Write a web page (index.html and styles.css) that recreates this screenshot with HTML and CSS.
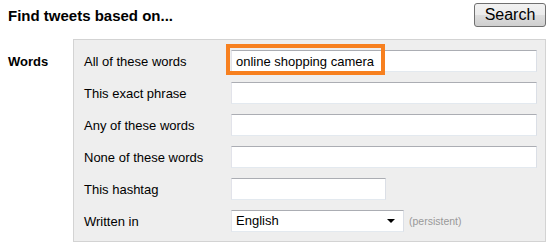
FILE: index.html
```html
<!DOCTYPE html>
<html lang="en">
<head>
    <meta charset="UTF-8">
    <title>Advanced Search</title>
    <link rel="stylesheet" href="styles.css">
</head>
<body>
    <div class="page">
        <div class="header">
            <h2>Find tweets based on...</h2>
            <button class="search-btn">Search</button>
        </div>

        <div class="section">
            <div class="section-title">Words</div>
            <div class="fields">
                <div class="row">
                    <label>All of these words</label>
                    <div class="field highlight-wrap">
                        <input type="text" value="online shopping camera">
                        <!-- orange marker drawn over the first box -->
                        <span class="highlight"></span>
                    </div>
                </div>
                <div class="row">
                    <label>This exact phrase</label>
                    <div class="field"><input type="text"></div>
                </div>
                <div class="row">
                    <label>Any of these words</label>
                    <div class="field"><input type="text"></div>
                </div>
                <div class="row">
                    <label>None of these words</label>
                    <div class="field"><input type="text"></div>
                </div>
                <div class="row">
                    <label>This hashtag</label>
                    <div class="field"><input type="text" class="short"></div>
                </div>
                <div class="row">
                    <label>Written in</label>
                    <div class="field">
                        <div class="select">
                            <span>English</span>
                            <span class="arrow"></span>
                        </div>
                        <span class="note">(persistent)</span>
                    </div>
                </div>
            </div>
        </div>
    </div>
</body>
</html>
```

FILE: styles.css
```css
body {
    margin: 0;
    font-family: "Liberation Sans", Arial, sans-serif;
    font-size: 13px;
    color: #000;
    background: #fff;
}
.page {
    padding: 3px 7px 5px 8px;
}
.header {
    display: flex;
    justify-content: space-between;
    align-items: center;
    height: 24px;
}
.header h2 {
    margin: 0;
    font-size: 15px;
    font-weight: bold;
}
.search-btn {
    height: 24px;
    width: 72px;
    padding: 0;
    font-family: "Liberation Sans", Arial, sans-serif;
    font-size: 16px;
    color: #000;
    border: 1px solid #707070;
    border-radius: 3px;
    background: linear-gradient(#f2f2f2 0%, #ebebeb 50%, #dddddd 51%, #cfcfcf 100%);
}
.section {
    display: flex;
    margin-top: 12px;
}
.section-title {
    width: 65px;
    font-weight: bold;
    padding-top: 15px;
}
.fields {
    flex: 1;
    background: #eeeeee;
    border: 1px solid #d3d3d3;
    padding: 10px 8px 9px 10px;
    display: flex;
    flex-direction: column;
    gap: 10px;
}
.row {
    display: flex;
    align-items: center;
    height: 22px;
}
.row label {
    width: 147px;
    padding-top: 1px;
}
.field {
    flex: 1;
    display: flex;
    align-items: center;
}
.field input {
    box-sizing: border-box;
    width: 306px;
    height: 22px;
    margin: 0;
    padding: 1px 4px 0;
    font-family: "Liberation Sans", Arial, sans-serif;
    font-size: 13px;
    color: #000;
    background: #fff;
    border: 1px solid;
    border-color: #abadb3 #dbdfe6 #e3e9ef #e2e3ea;
    outline: none;
}
.field input.short {
    width: 155px;
}
.highlight-wrap {
    position: relative;
}
.highlight {
    position: absolute;
    left: -5px;
    top: -6px;
    width: 159px;
    height: 31px;
    box-sizing: border-box;
    border: 4px solid #f7801f;
    pointer-events: none;
}
.select {
    box-sizing: border-box;
    width: 173px;
    height: 22px;
    display: flex;
    justify-content: space-between;
    align-items: center;
    padding: 0 8px 1px 4px;
    background: #fff;
    border: 1px solid;
    border-color: #abadb3 #dbdfe6 #e3e9ef #e2e3ea;
}
.arrow {
    width: 0;
    height: 0;
    border-left: 4px solid transparent;
    border-right: 4px solid transparent;
    border-top: 4px solid #000;
}
.note {
    margin-left: 5px;
    font-size: 10.5px;
    color: #999;
}
```
